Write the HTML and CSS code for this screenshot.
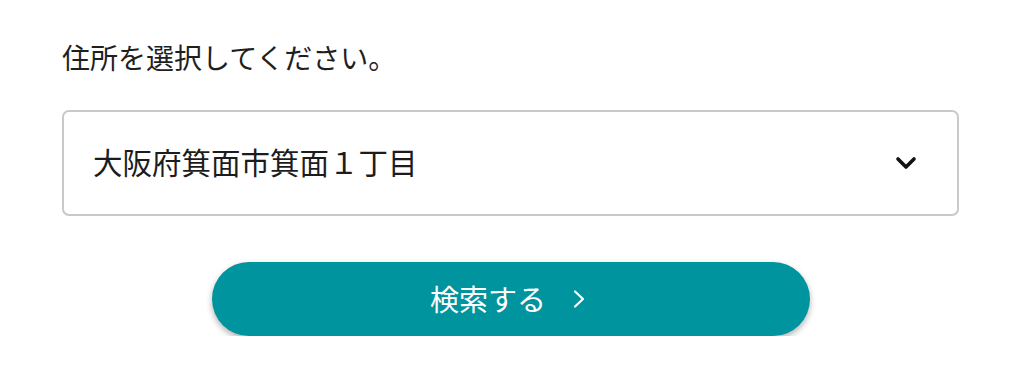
FILE: index.html
```html
<!DOCTYPE html>
<html lang="ja">
<head>
<meta charset="utf-8">
<title>住所選択</title>
<link rel="stylesheet" href="styles.css">
</head>
<body>
<main class="panel">
  <p class="label">住所を選択してください。</p>
  <div class="select">
    <span class="select-value">大阪府箕面市箕面１丁目</span>
    <svg class="select-chevron" width="22" height="14" viewBox="0 0 22 14" aria-hidden="true">
      <path d="M3 3 L11 11 L19 3" fill="none" stroke="#111" stroke-width="3.6" stroke-linecap="round" stroke-linejoin="round"/>
    </svg>
  </div>
  <div class="actions">
    <button class="search-btn" type="button">
      <span class="search-text">検索する</span>
      <svg class="search-chevron" width="14" height="20" viewBox="0 0 14 20" aria-hidden="true">
        <path d="M3 2.5 L11 10 L3 17.5" fill="none" stroke="#fff" stroke-width="2.2" stroke-linecap="round" stroke-linejoin="round"/>
      </svg>
    </button>
  </div>
</main>
</body>
</html>
```
FILE: styles.css
```css
html, body {
  margin: 0;
  padding: 0;
  background: #ffffff;
}
body {
  font-family: "Noto Sans CJK JP", "Noto Sans", sans-serif;
  color: #222222;
}
.panel {
  width: 897px;
  padding: 36px 0 0 62px;
}
.label {
  margin: 0;
  font-size: 28px;
  line-height: 42px;
  color: #1f1f1f;
}
.select {
  margin-top: 32px;
  height: 106px;
  box-sizing: border-box;
  border: 2px solid #c9c9c9;
  border-radius: 7px;
  display: flex;
  align-items: center;
  justify-content: space-between;
  padding: 0 40px 0 29px;
}
.select-value {
  font-size: 29.5px;
  line-height: 40px;
  margin-top: -4px;
  color: #1c1c1c;
}
.select-chevron {
  display: block;
}
.actions {
  margin-top: 46px;
  display: flex;
  justify-content: center;
}
.search-btn {
  width: 598px;
  height: 74px;
  border: none;
  border-radius: 37px;
  background: #00949e;
  box-shadow: 0 3px 6px rgba(0, 0, 0, 0.3);
  display: flex;
  align-items: center;
  justify-content: center;
  gap: 26px;
  padding: 0 5px 0 0;
  font-family: "Noto Sans CJK JP", "Noto Sans", sans-serif;
  color: #ffffff;
  cursor: pointer;
}
.search-text {
  font-size: 29px;
  line-height: 40px;
  margin-top: -3px;
  color: #ffffff;
}
.search-chevron {
  display: block;
}
```
